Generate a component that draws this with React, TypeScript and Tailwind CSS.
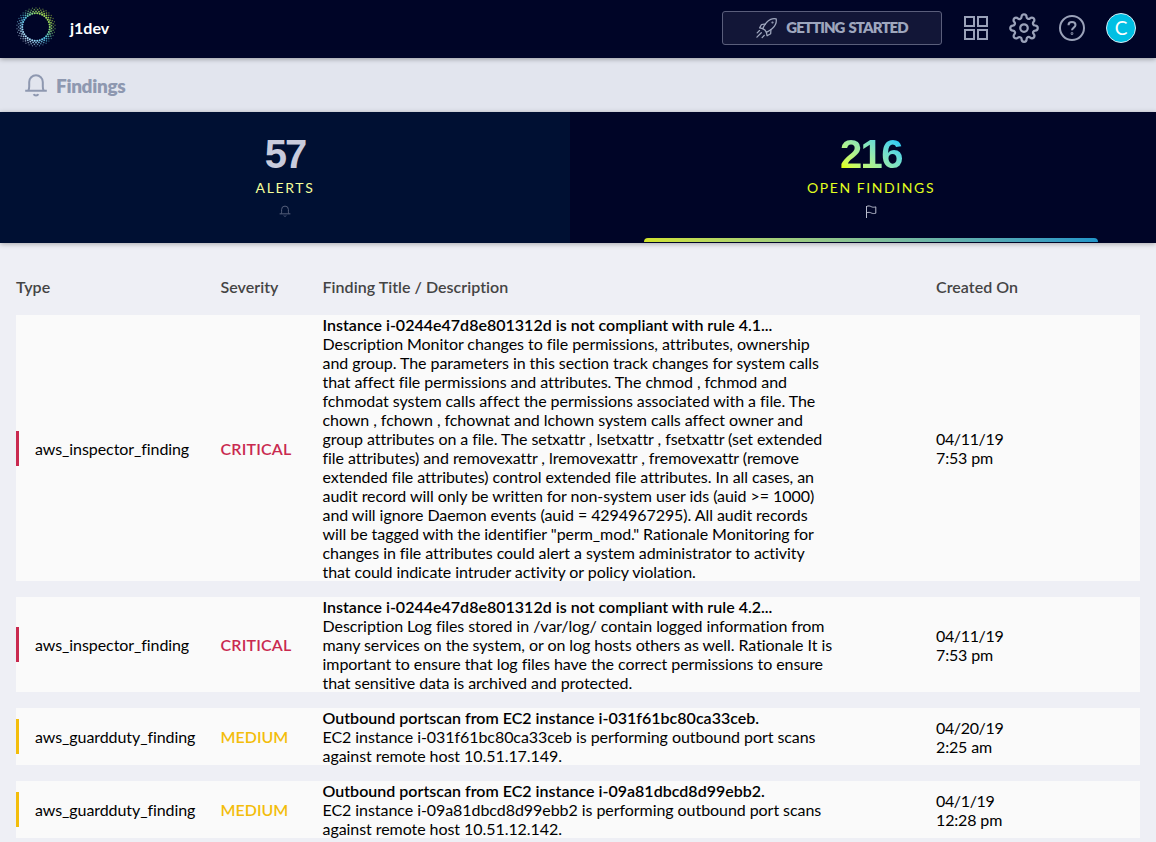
import { FiSettings } from "react-icons/fi";

interface Finding {
  type: string;
  severity: "CRITICAL" | "MEDIUM";
  title: string;
  description: string;
  date: string;
  time: string;
}

const findings: Finding[] = [
  {
    type: "aws_inspector_finding",
    severity: "CRITICAL",
    title: "Instance i-0244e47d8e801312d is not compliant with rule 4.1...",
    description:
      'Description Monitor changes to file permissions, attributes, ownership and group. The parameters in this section track changes for system calls that affect file permissions and attributes. The chmod , fchmod and fchmodat system calls affect the permissions associated with a file. The chown , fchown , fchownat and lchown system calls affect owner and group attributes on a file. The setxattr , lsetxattr , fsetxattr (set extended file attributes) and removexattr , lremovexattr , fremovexattr (remove extended file attributes) control extended file attributes. In all cases, an audit record will only be written for non-system user ids (auid >= 1000) and will ignore Daemon events (auid = 4294967295). All audit records will be tagged with the identifier "perm_mod." Rationale Monitoring for changes in file attributes could alert a system administrator to activity that could indicate intruder activity or policy violation.',
    date: "04/11/19",
    time: "7:53 pm",
  },
  {
    type: "aws_inspector_finding",
    severity: "CRITICAL",
    title: "Instance i-0244e47d8e801312d is not compliant with rule 4.2...",
    description:
      "Description Log files stored in /var/log/ contain logged information from many services on the system, or on log hosts others as well. Rationale It is important to ensure that log files have the correct permissions to ensure that sensitive data is archived and protected.",
    date: "04/11/19",
    time: "7:53 pm",
  },
  {
    type: "aws_guardduty_finding",
    severity: "MEDIUM",
    title: "Outbound portscan from EC2 instance i-031f61bc80ca33ceb.",
    description:
      "EC2 instance i-031f61bc80ca33ceb is performing outbound port scans against remote host 10.51.17.149.",
    date: "04/20/19",
    time: "2:25 am",
  },
  {
    type: "aws_guardduty_finding",
    severity: "MEDIUM",
    title: "Outbound portscan from EC2 instance i-09a81dbcd8d99ebb2.",
    description:
      "EC2 instance i-09a81dbcd8d99ebb2 is performing outbound port scans against remote host 10.51.12.142.",
    date: "04/1/19",
    time: "12:28 pm",
  },
];

const rings = [
  { r: 13.8, size: 1.05, opacity: 1 },
  { r: 15.6, size: 0.9, opacity: 0.85 },
  { r: 17.4, size: 0.8, opacity: 0.65 },
  { r: 19.1, size: 0.65, opacity: 0.5 },
];

function Logo() {
  return (
    <svg width="40" height="40" viewBox="0 0 40 40">
      <defs>
        <linearGradient id="ring" gradientUnits="userSpaceOnUse" x1="34" y1="4" x2="5" y2="34">
          <stop offset="0" stopColor="#c6e635" />
          <stop offset="0.3" stopColor="#8fdc6c" />
          <stop offset="0.55" stopColor="#4fc3e8" />
          <stop offset="1" stopColor="#e3ecff" />
        </linearGradient>
      </defs>
      {rings.map((ring, k) => (
        <g key={ring.r} fill="url(#ring)" opacity={ring.opacity}>
          {Array.from({ length: 34 }, (_, i) => {
            const a = ((i + (k % 2) / 2) * Math.PI * 2) / 34;
            return (
              <circle
                key={i}
                cx={20 + ring.r * Math.cos(a)}
                cy={20 + ring.r * Math.sin(a)}
                r={ring.size}
              />
            );
          })}
        </g>
      ))}
    </svg>
  );
}

function Bell({ size, stroke }: { size: number; stroke: number }) {
  return (
    <svg width={size} height={size} viewBox="0 0 24 24" fill="none" stroke="currentColor" strokeWidth={stroke}>
      <path d="M1.2 17.7h21.6M4.3 17.5c.8-1.300.9-2.300.9-4V9A6.800 6.800 0 0 1 12 2.200 6.800 6.800 0 0 1 18.800 9v4.500c0 1.700.1 2.700.9 4" />
      <path d="M9.700 21.200c.4 1 1.300 1.400 2.300 1.400s1.900-.4 2.300-1.400" />
    </svg>
  );
}

function Rocket() {
  return (
    <svg width="22" height="22" viewBox="0 0 24 24" fill="none" stroke="currentColor" strokeWidth="1.400" strokeLinecap="round" strokeLinejoin="round">
      <path d="M7.300 12.700C9 8.800 12.500 4 16 2.500c2-.8 4.300-.9 6-.5.300 1.800.2 4-.7 6-1.500 3.500-6.200 7-10 8.700-.7-1.600-2.400-3.300-4-4z" />
      <path d="M10.300 7.700 6 8.200l-2 3.700 3.300.8M16.300 13.700 16 18.200l-3.900 2.300-.8-3.800" />
      <path d="M3.800 14.800 1.300 17.300M5.800 17.200 1 22M9 20l-2.300 2.500" />
      <circle cx="18" cy="6" r=".5" />
    </svg>
  );
}

function Header() {
  return (
    <header className="relative z-10 flex h-[58px] items-center bg-[#000527] pr-5 pl-4 shadow-[0_1px_5px_rgba(0,0,0,0.35)]">
      <div className="mb-1 flex h-10 w-10">
        <Logo />
      </div>
      <span className="mb-0.5 ml-[14px] text-base font-bold text-white">j1dev</span>
      <button className="mb-0.5 ml-auto flex h-[34px] w-[220px] items-center justify-center gap-2 rounded-[3px] border border-[#5a5e7b] bg-[#121637] text-[#9ea6bd]">
        <Rocket />
        <span className="mb-0.5 text-[15px] font-extrabold tracking-[-0.950px] [word-spacing:1.500px]">GETTING STARTED</span>
      </button>
      <div className="mb-0.5 ml-[22px] flex items-center text-[#9aa2b9]">
        <svg width="24" height="24" viewBox="0 0 24 24" fill="none" stroke="currentColor" strokeWidth="2">
          <path d="M1 1h9v9H1zM14 1h9v9h-9zM1 14h9v9H1zM14 14h9v9h-9z" />
        </svg>
        <FiSettings className="ml-[21px] size-[30px]" strokeWidth={1.8} />
        <svg className="ml-5" width="26" height="26" viewBox="0 0 26 26" fill="none" stroke="currentColor" strokeWidth="2">
          <circle cx="13" cy="13" r="12" />
          <path d="M9.500 10.200c0-2 1.500-3.200 3.500-3.200s3.500 1.200 3.500 3.100c0 2.500-3.500 2.600-3.500 5.200" />
          <circle cx="13" cy="18.600" r=".4" />
        </svg>
        <div className="ml-[21px] flex size-[30px] items-center justify-center rounded-full border border-[#d5edf5] bg-[#00bfe3] pb-0.5 text-[19px] leading-none text-white">
          C
        </div>
      </div>
    </header>
  );
}

function Tabs() {
  return (
    <div className="relative flex h-[131px] shadow-[0_1px_5px_rgba(0,0,0,0.3)]">
      <div className="flex w-[570px] flex-col items-center bg-[#001033] pt-[18px]">
        <span className="font-['Liberation_Sans'] text-[40px] leading-[48px] font-bold tracking-[-2px] text-[#c8cbdc]">57</span>
        <span className="mt-px text-sm leading-[17px] tracking-[1.650px] text-[#f4ff9b]">ALERTS</span>
        <span className="mt-[9px] mr-px text-[#56607c]">
          <Bell size={12} stroke={2} />
        </span>
      </div>
      <div className="flex flex-1 flex-col items-center bg-[#000527] pt-[18px] pl-4">
        <span className="bg-linear-to-tr from-[#dcff1e] from-15% to-[#2dcdf5] to-85% bg-clip-text font-['Liberation_Sans'] text-[40px] leading-[48px] font-bold tracking-[-1.500px] text-transparent">
          216
        </span>
        <span className="mt-px text-sm leading-[17px] tracking-[1.580px] text-[#e2ff1f]">OPEN FINDINGS</span>
        <svg className="mt-[9px] text-[#b8bccd]" width="12" height="13" viewBox="0 0 12 13" fill="none" stroke="currentColor">
          <path d="M1.500 13V1M1.500 1.500c2-1 3.500-.5 4.800.2 1.500.7 2.800.6 4.500.2v6.300c-1.700.5-3 .5-4.500-.2-1.300-.6-2.800-1.100-4.800-.1" />
        </svg>
        <div className="mt-auto mb-px h-1 w-[454px] rounded-t-[4px] bg-linear-to-r from-[#d0e32b] to-[#2196c9]" />
      </div>
    </div>
  );
}

const columns = "grid grid-cols-[204.500px_102px_613.500px_1fr]";

export default function App() {
  return (
    <div className="h-[842px] overflow-hidden bg-[#eeeff5] font-[Lato,sans-serif] text-base leading-[19px] text-black">
      <Header />
      <div className="flex h-[54px] items-center gap-2 bg-[#e2e5ee] pl-6 text-[#8e98b0]">
        <Bell size={24} stroke={2} />
        <h1 className="text-[19px] font-extrabold tracking-[-0.350px]">Findings</h1>
      </div>
      <Tabs />
      <main className="px-4 pt-[34px]">
        <div className={`${columns} mb-[19px] font-semibold tracking-[0.040px] text-[#444444]`}>
          <span>Type</span>
          <span>Severity</span>
          <span>Finding Title / Description</span>
          <span>Created On</span>
        </div>
        <div className="flex flex-col gap-4">
          {findings.map((f) => {
            const critical = f.severity === "CRITICAL";
            return (
              <div key={f.title} className={`${columns} items-center bg-[#fafafa]`}>
                <div
                  className={`flex h-[35px] items-center border-l-[3px] pl-4 tracking-[-0.080px] ${critical ? "border-[#c9294f]" : "border-[#f3bd0b]"}`}
                >
                  {f.type}
                </div>
                <span className={`font-semibold ${critical ? "tracking-[0.180px] text-[#c9294f]" : "text-[#f3bd0b]"}`}>
                  {f.severity}
                </span>
                <div className="w-[511px]">
                  <div className="font-semibold tracking-[0.010px] whitespace-nowrap">{f.title}</div>
                  <p className="tracking-[-0.060px]">{f.description}</p>
                </div>
                <div>
                  <div className="tracking-[-0.350px]">{f.date}</div>
                  <div className="tracking-[-0.150px]">{f.time}</div>
                </div>
              </div>
            );
          })}
        </div>
      </main>
    </div>
  );
}
